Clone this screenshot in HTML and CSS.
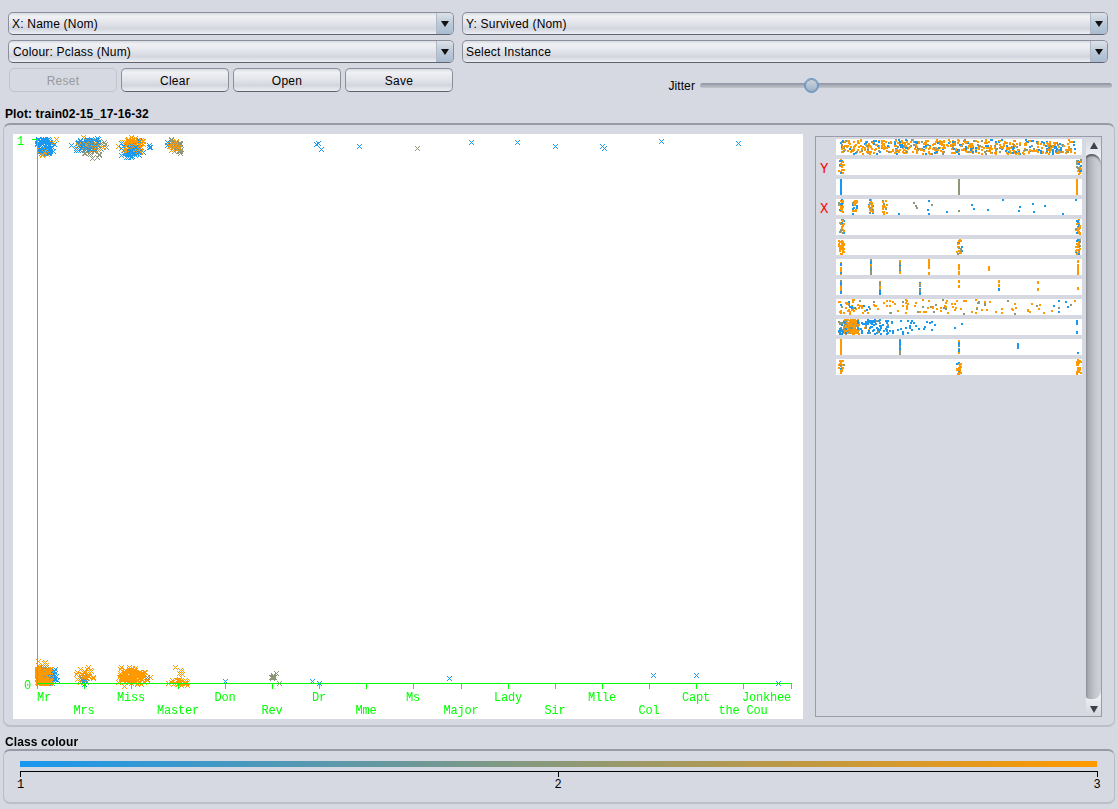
FILE: index.html
```html
<!DOCTYPE html>
<html lang="en">
<head>
  <meta charset="UTF-8">
  <title>Visualize</title>
  <link rel="stylesheet" href="styles.css">
</head>
<body>
  <div class="controls">
    <div class="combo"><span class="combo-text">X: Name (Nom)</span><span class="combo-arrow"></span></div>
    <div class="combo"><span class="combo-text">Y: Survived (Nom)</span><span class="combo-arrow"></span></div>
    <div class="combo"><span class="combo-text combo-text-colour">Colour: Pclass (Num)</span><span class="combo-arrow"></span></div>
    <div class="combo"><span class="combo-text">Select Instance</span><span class="combo-arrow"></span></div>
    <div class="buttons">
      <button class="btn" disabled>Reset</button>
      <button class="btn">Clear</button>
      <button class="btn">Open</button>
      <button class="btn">Save</button>
    </div>
    <div class="jitter">
      <span class="jitter-label">Jitter</span>
      <div class="slider"><span class="slider-thumb"></span></div>
    </div>
  </div>

  <div class="section-title plot-title">Plot: train02-15_17-16-32</div>
  <div class="panel plot-panel">
    <div class="plot">
      <canvas id="scatter" width="790" height="585"></canvas>
      <svg class="plot-axes" width="790" height="585">
        <path class="axis-line" d="M24.5 5V550M19 5.5H24M24 549.5H778.5"/>
        <path class="axis-line" d="M24.5 549V555M71.5 549V555M118.5 549V555M165.5 549V555M212.5 549V555M259.5 549V555M306.5 549V555M353.5 549V555M400.5 549V555M448.5 549V555M495.5 549V555M542.5 549V555M589.5 549V555M636.5 549V555M683.5 549V555M730.5 549V555M778.5 549V555"/>
        <text class="axis-text" x="4" y="11">1</text>
        <text class="axis-text" x="11" y="555">0</text>
        <text class="axis-text" x="24" y="567">Mr</text>
        <text class="axis-text mid" x="71" y="580">Mrs</text>
        <text class="axis-text mid" x="118" y="567">Miss</text>
        <text class="axis-text mid" x="165" y="580">Master</text>
        <text class="axis-text mid" x="212" y="567">Don</text>
        <text class="axis-text mid" x="259" y="580">Rev</text>
        <text class="axis-text mid" x="306" y="567">Dr</text>
        <text class="axis-text mid" x="353" y="580">Mme</text>
        <text class="axis-text mid" x="400" y="567">Ms</text>
        <text class="axis-text mid" x="448" y="580">Major</text>
        <text class="axis-text mid" x="495" y="567">Lady</text>
        <text class="axis-text mid" x="542" y="580">Sir</text>
        <text class="axis-text mid" x="589" y="567">Mlle</text>
        <text class="axis-text mid" x="636" y="580">Col</text>
        <text class="axis-text mid" x="683" y="567">Capt</text>
        <text class="axis-text mid" x="730" y="580">the Cou</text>
        <text class="axis-text end" x="778" y="567">Jonkhee</text>
      </svg>
    </div>
    <div class="strips-box">
      <div class="strips">
        <div class="strip-row"><span class="strip-tag"></span><canvas class="strip" width="246" height="16"></canvas></div>
        <div class="strip-row"><span class="strip-tag">Y</span><canvas class="strip" width="246" height="16"></canvas></div>
        <div class="strip-row"><span class="strip-tag"></span><canvas class="strip" width="246" height="16"></canvas></div>
        <div class="strip-row"><span class="strip-tag">X</span><canvas class="strip" width="246" height="16"></canvas></div>
        <div class="strip-row"><span class="strip-tag"></span><canvas class="strip" width="246" height="16"></canvas></div>
        <div class="strip-row"><span class="strip-tag"></span><canvas class="strip" width="246" height="16"></canvas></div>
        <div class="strip-row"><span class="strip-tag"></span><canvas class="strip" width="246" height="16"></canvas></div>
        <div class="strip-row"><span class="strip-tag"></span><canvas class="strip" width="246" height="16"></canvas></div>
        <div class="strip-row"><span class="strip-tag"></span><canvas class="strip" width="246" height="16"></canvas></div>
        <div class="strip-row"><span class="strip-tag"></span><canvas class="strip" width="246" height="16"></canvas></div>
        <div class="strip-row"><span class="strip-tag"></span><canvas class="strip" width="246" height="16"></canvas></div>
        <div class="strip-row"><span class="strip-tag"></span><canvas class="strip" width="246" height="16"></canvas></div>
      </div>
      <div class="scrollbar">
        <div class="scroll-btn"><span class="arrow-up"></span></div>
        <div class="scroll-thumb"></div>
        <div class="scroll-btn scroll-btn-down"><span class="arrow-down"></span></div>
      </div>
    </div>
  </div>

  <div class="section-title class-title">Class colour</div>
  <div class="panel class-panel">
    <div class="class-bar"></div>
    <svg class="class-scale" width="1084" height="20">
      <path class="scale-line" d="M3.5 6V0.5H1080.5V6M541 0.5V6"/>
      <text class="scale-text" x="3.5" y="17">1</text>
      <text class="scale-text" x="541" y="17">2</text>
      <text class="scale-text" x="1080" y="17">3</text>
    </svg>
  </div>

  <script src="script.js"></script>
</body>
</html>
```

FILE: styles.css
```css
body {
  margin: 0;
  width: 1118px;
  height: 809px;
  overflow: hidden;
  background-color: #d6d9e1;
  font-family: "Liberation Sans", Arial, sans-serif;
  font-size: 12px;
  color: #000;
}

.controls {
  display: grid;
  grid-template-columns: 446px 646px;
  column-gap: 8px;
  row-gap: 5px;
  padding: 12px 0 0 8px;
}

.combo {
  display: flex;
  height: 23px;
  box-sizing: border-box;
  border: 1px solid #8b8f9b;
  border-bottom-color: #5f6370;
  border-radius: 5px;
  overflow: hidden;
  background: linear-gradient(#d8dbe2 0, #f0f1f5 15%, #e4e6ec 45%, #d3d6de 75%, #eceef3 100%);
}

.combo-text {
  flex: 1;
  padding-left: 3px;
  line-height: 22px;
  letter-spacing: 0.2px;
}

.combo-text-colour {
  padding-left: 4px;
}

.combo-arrow {
  position: relative;
  width: 16px;
  background: linear-gradient(#dde2e9 0, #bccad9 50%, #a9bcd0 100%);
  border-left: 1px solid #b0b8c4;
}

.combo-arrow::after {
  content: "";
  position: absolute;
  left: 4px;
  top: 8px;
  border-left: 4px solid transparent;
  border-right: 4px solid transparent;
  border-top: 6px solid #111;
}

.buttons {
  display: flex;
  gap: 4px;
  padding-left: 1px;
}

.btn {
  width: 108px;
  height: 24px;
  padding: 1px 0 0;
  box-sizing: border-box;
  border: 1px solid #8b8f9b;
  border-bottom-color: #5f6370;
  border-radius: 5px;
  background: linear-gradient(#d8dbe2 0, #f0f1f5 15%, #e4e6ec 45%, #d3d6de 75%, #eceef3 100%);
  font-family: inherit;
  font-size: 12px;
  letter-spacing: 0.25px;
  color: #000;
}

.btn:disabled {
  background: #d6d9e1;
  border-color: #c0c3cb;
  color: #979a9f;
}

.jitter {
  display: flex;
  justify-content: flex-end;
  align-items: center;
  gap: 5px;
  margin-right: -4px;
  padding-top: 11px;
  height: 13px;
}

.jitter-label {
  letter-spacing: 0.1px;
}

.slider {
  position: relative;
  width: 412px;
  height: 5px;
  border-radius: 3px;
  background: linear-gradient(#8f94a1, #c2c5cd);
}

.slider-thumb {
  position: absolute;
  left: 104px;
  top: -5px;
  width: 15px;
  height: 15px;
  box-sizing: border-box;
  border: 1px solid #5f94c8;
  border-radius: 50%;
  background: linear-gradient(#cfd6df, #9db0c6);
  box-shadow: inset 0 0 0 1px #7b93ad;
}

.section-title {
  font-weight: bold;
  margin-left: 5px;
  line-height: 14px;
  letter-spacing: 0.1px;
}

.plot-title {
  margin-top: 15px;
}

.class-title {
  margin-top: 8px;
}

.panel {
  margin: 0 3px;
  box-sizing: border-box;
  border: 1px solid #b9bcc4;
  border-top: 2px solid #989ba4;
  border-bottom: 2px solid #bcbfc7;
  border-radius: 7px;
}

.plot-panel {
  display: flex;
  height: 604px;
  margin-top: 2px;
  padding: 9px 12px 0 9px;
}

.plot {
  position: relative;
  width: 790px;
  height: 585px;
  background: #fff;
}

.plot canvas,
.plot-axes {
  position: absolute;
  left: 0;
  top: 0;
}

.axis-line {
  fill: none;
  stroke: #00ff00;
  stroke-width: 1;
  shape-rendering: crispEdges;
}

.axis-text {
  fill: #00ff00;
  font-family: "Liberation Mono", monospace;
  font-size: 12px;
  letter-spacing: -0.2px;
}

.axis-text.mid {
  text-anchor: middle;
}

.axis-text.end {
  text-anchor: end;
}

.strips-box {
  display: flex;
  gap: 4px;
  width: 287px;
  height: 581px;
  margin: 2px 0 0 12px;
  box-sizing: border-box;
  border: 1px solid #9a9da9;
  padding-top: 2px;
}

.strips {
  display: flex;
  flex-direction: column;
  gap: 4px;
}

.strip-row {
  display: flex;
  height: 16px;
}

.strip-tag {
  width: 20px;
  padding-left: 4px;
  box-sizing: border-box;
  color: #ff0000;
  font-family: "Liberation Mono", monospace;
  font-size: 14px;
  line-height: 21px;
}

.strip {
  display: block;
  background: #fff;
}

.scrollbar {
  display: flex;
  flex-direction: column;
  width: 15px;
  margin-top: -2px;
  background: #eceef1;
}

.scroll-btn {
  flex: none;
  height: 17px;
  display: flex;
  justify-content: center;
  padding-top: 5px;
  box-sizing: border-box;
  background: linear-gradient(#d3d6dd, #eceef1);
}

.scroll-btn-down {
  padding-top: 7px;
  background: linear-gradient(#eceef1, #d3d6dd);
}

.arrow-up {
  width: 0;
  height: 0;
  border-left: 4px solid transparent;
  border-right: 4px solid transparent;
  border-bottom: 7px solid #404249;
}

.arrow-down {
  width: 0;
  height: 0;
  border-left: 4px solid transparent;
  border-right: 4px solid transparent;
  border-top: 7px solid #404249;
}

.scroll-thumb {
  flex: 1;
  border-radius: 6px 9px 7px 4px / 3px 10px 10px 3px;
  background: linear-gradient(90deg, #8f9199 0, #a9abb2 15%, #c3c5cb 55%, #d2d4da 100%);
  box-shadow: inset 0 3px 2px -1px #55575e;
}

.class-panel {
  height: 55px;
  padding: 10px 0 0 16px;
}

.class-bar {
  width: 1077px;
  height: 6px;
  background: linear-gradient(90deg, #1898f0, #ff9900);
}

.class-scale {
  display: block;
  margin: 4px 0 0 -3px;
}

.scale-line {
  fill: none;
  stroke: #000;
  stroke-width: 1;
  shape-rendering: crispEdges;
}

.scale-text {
  font-family: "Liberation Mono", monospace;
  font-size: 12px;
  text-anchor: middle;
}
```

FILE: script.js
```js
// fixed seed, the picture has to come out the same every time
var seed = 20240215;
function rnd() {
  seed = (seed + 0x6d2b79f5) | 0;
  var t = Math.imul(seed ^ (seed >>> 15), 1 | seed);
  t = (t + Math.imul(t ^ (t >>> 7), 61 | t)) ^ t;
  return ((t ^ (t >>> 14)) >>> 0) / 4294967296;
}
function range(a, b) {
  return a + rnd() * (b - a);
}
function bell(a, b) {
  return a + (rnd() + rnd()) / 2 * (b - a);
}

var B = '#1898f0', G = '#8c9778', O = '#ff9900';

// main scatter plot, coordinates below are page coordinates
var points = [];
function cloud(n, color, x1, x2, y1, y2, fn) {
  for (var i = 0; i < n; i++) {
    points.push([(fn || bell)(x1, x2), (fn || bell)(y1, y2), color]);
  }
}

// survived row
cloud(70, B, 37, 50, 139, 153, range);
cloud(14, O, 38, 52, 146, 157);
cloud(4, O, 50, 57, 139, 147, range);
cloud(6, B, 46, 58, 138, 154);
cloud(60, B, 70, 104, 136, 152);
cloud(30, G, 72, 108, 138, 158);
cloud(26, O, 76, 108, 136, 154);
cloud(8, B, 84, 96, 140, 150, range);
cloud(90, O, 117, 146, 136, 154);
cloud(60, B, 118, 144, 138, 160);
cloud(16, B, 124, 138, 148, 158);
cloud(3, B, 148, 152, 142, 148);
cloud(22, G, 168, 183, 138, 153);
cloud(24, O, 168, 182, 140, 152);
cloud(2, B, 166, 170, 140, 146);
cloud(3, G, 176, 184, 146, 156);

// died row
cloud(520, O, 37, 51, 669, 683, range);
cloud(40, G, 37, 50, 665, 680);
cloud(8, O, 37, 46, 660, 668, range);
cloud(24, B, 44, 59, 668, 684);
cloud(26, O, 72, 98, 668, 686);
cloud(5, O, 84, 91, 666, 680);
cloud(8, G, 78, 88, 674, 684);
cloud(3, B, 82, 86, 680, 684);
cloud(110, O, 117, 146, 666, 686);
cloud(10, O, 114, 150, 674, 684, range);
cloud(2, G, 144, 150, 676, 680);
cloud(34, O, 166, 190, 678, 686);
cloud(4, O, 174, 184, 666, 676);
cloud(8, G, 268, 276, 674, 682);

var singles = [
  [316, 144, B], [318, 143, B], [321, 149, B], [359, 146, B], [417, 148, G], [471, 142, B],
  [517, 142, B], [555, 146, B], [602, 146, B], [604, 148, B], [661, 141, B], [738, 143, B],
  [225, 681, B], [276, 673, G], [279, 683, G], [312, 681, B], [319, 683, B], [319, 683, G],
  [449, 678, B], [653, 675, B], [696, 675, B], [778, 683, B],
  [175, 667, O], [181, 673, O], [150, 677, O], [88, 667, O]
];
points = points.concat(singles);

// weka paints in row order, so the classes end up mixed
for (var i = points.length - 1; i > 0; i--) {
  var j = Math.floor(rnd() * (i + 1));
  var tmp = points[i]; points[i] = points[j]; points[j] = tmp;
}

var ctx = document.getElementById('scatter').getContext('2d');
points.forEach(function (p) {
  var x = Math.round(p[0]) - 13, y = Math.round(p[1]) - 134;
  ctx.fillStyle = p[2];
  for (var d = -2; d <= 2; d++) {
    ctx.fillRect(x + d, y + d, 1, 1);
    ctx.fillRect(x + d, y - d, 1, 1);
  }
});

// attribute strips on the right
function pick(mix) {
  var r = rnd(), sum = 0;
  for (var i = 0; i < mix.length; i++) {
    sum += mix[i][1];
    if (r < sum) return mix[i][0];
  }
  return mix[mix.length - 1][0];
}
var OBG = [[O, 0.55], [B, 0.25], [G, 0.2]];

function dots(c, n, x1, x2, mix, fn) {
  for (var i = 0; i < n; i++) {
    c.fillStyle = pick(mix);
    c.fillRect(Math.round((fn || range)(x1, x2)) - 836, Math.round(range(0, 14)), 2, 2);
  }
}
function column(c, x, n, mix) {
  for (var i = 0; i < n; i++) {
    c.fillStyle = pick(mix);
    c.fillRect(x - 836, Math.round(range(0, 13)), 2, 3);
  }
}
function place(c, list) {
  list.forEach(function (p) {
    c.fillStyle = p[2];
    c.fillRect(p[0] - 836, p[1], 2, 2);
  });
}

var strips = document.querySelectorAll('.strip');
var painters = [
  function (c) { dots(c, 640, 840, 1076, [[O, 0.62], [B, 0.23], [G, 0.15]]); },
  function (c) {
    dots(c, 22, 838, 843, [[O, 0.7], [B, 0.2], [G, 0.1]]);
    dots(c, 24, 1075, 1080, [[O, 0.45], [B, 0.35], [G, 0.2]]);
  },
  function (c) {
    c.fillStyle = B; c.fillRect(4, 0, 2, 16);
    c.fillStyle = G; c.fillRect(122, 0, 2, 16);
    c.fillStyle = O; c.fillRect(240, 0, 2, 16);
  },
  function (c) {
    var mix = [[O, 0.6], [B, 0.25], [G, 0.15]];
    dots(c, 30, 838, 842, mix);
    dots(c, 24, 852, 856, mix);
    dots(c, 26, 868, 872, mix);
    dots(c, 22, 882, 886, [[O, 0.8], [G, 0.2]]);
    place(c, [
      [898, 14, B], [913, 3, G], [915, 6, G], [916, 8, G], [928, 1, B], [931, 5, G], [927, 10, B],
      [928, 14, B], [946, 12, B], [958, 11, G], [971, 5, B], [973, 9, B], [987, 10, B], [1002, 0, B],
      [1018, 11, B], [1019, 7, B], [1032, 4, B], [1033, 12, B], [1044, 6, B], [1062, 14, B], [1075, 0, B]
    ]);
  },
  function (c) {
    dots(c, 24, 839, 843, [[O, 0.5], [B, 0.3], [G, 0.2]]);
    dots(c, 26, 1075, 1079, OBG);
  },
  function (c) {
    dots(c, 34, 838, 843, [[O, 0.9], [G, 0.1]]);
    dots(c, 26, 956, 961, [[O, 0.6], [B, 0.2], [G, 0.2]]);
    dots(c, 26, 1075, 1079, OBG);
  },
  function (c) {
    column(c, 840, 14, [[O, 0.6], [B, 0.3], [G, 0.1]]);
    column(c, 870, 14, [[O, 0.4], [B, 0.3], [G, 0.3]]);
    column(c, 899, 14, [[O, 0.4], [B, 0.3], [G, 0.3]]);
    column(c, 928, 6, [[O, 0.9], [B, 0.1]]);
    column(c, 958, 8, [[O, 1]]);
    column(c, 988, 4, [[O, 1]]);
    column(c, 1077, 6, [[O, 1]]);
  },
  function (c) {
    column(c, 840, 14, [[O, 0.5], [B, 0.4], [G, 0.1]]);
    column(c, 879, 14, [[O, 0.3], [B, 0.3], [G, 0.4]]);
    column(c, 919, 14, [[O, 0.4], [B, 0.4], [G, 0.2]]);
    column(c, 958, 3, [[O, 0.7], [G, 0.3]]);
    column(c, 998, 3, [[O, 0.7], [B, 0.3]]);
    column(c, 1037, 3, [[O, 1]]);
    column(c, 1077, 1, [[O, 1]]);
  },
  function (c) {
    dots(c, 50, 838, 870, [[O, 0.65], [B, 0.2], [G, 0.15]]);
    dots(c, 60, 870, 960, [[O, 0.7], [G, 0.3]]);
    dots(c, 34, 960, 1040, [[O, 0.6], [G, 0.4]]);
    dots(c, 10, 1030, 1076, [[O, 0.4], [G, 0.4], [B, 0.2]]);
  },
  function (c) {
    dots(c, 220, 843, 858, [[O, 0.85], [G, 0.15]]);
    dots(c, 24, 838, 845, [[B, 0.5], [G, 0.5]]);
    dots(c, 80, 856, 888, [[B, 0.85], [O, 0.08], [G, 0.07]]);
    dots(c, 20, 888, 915, [[B, 1]]);
    dots(c, 10, 915, 962, [[B, 1]]);
    column(c, 1076, 3, [[B, 1]]);
  },
  function (c) {
    column(c, 840, 14, [[O, 0.9], [G, 0.1]]);
    column(c, 899, 14, [[B, 0.6], [G, 0.4]]);
    column(c, 958, 7, [[B, 0.5], [O, 0.3], [G, 0.2]]);
    column(c, 1017, 3, [[B, 1]]);
    c.fillStyle = B; c.fillRect(241, 13, 2, 2);
  },
  function (c) {
    dots(c, 20, 838, 843, [[O, 0.75], [B, 0.15], [G, 0.1]]);
    dots(c, 26, 956, 960, [[O, 0.75], [B, 0.15], [G, 0.1]]);
    dots(c, 24, 1075, 1080, [[O, 1]]);
  }
];
strips.forEach(function (el, i) {
  painters[i](el.getContext('2d'));
});
```
